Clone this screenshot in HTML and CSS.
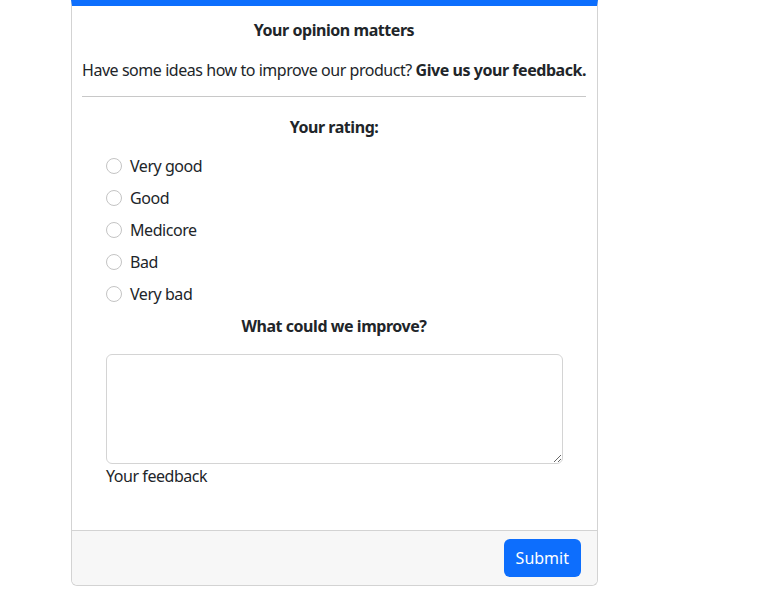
FILE: index.html
```html
<!DOCTYPE html>
<html lang="en">
<head>
<meta charset="utf-8">
<title>Feedback</title>
<link rel="stylesheet" href="styles.css">
</head>
<body>
<div class="card">
  <div class="card-body">
    <p class="title">Your opinion matters</p>
    <p class="lead-text">Have some ideas how to improve our product? <strong>Give us your feedback.</strong></p>
    <hr class="divider">
    <p class="title rating-title">Your rating:</p>
    <div class="options">
      <label class="option"><input type="radio" name="rating"><span>Very good</span></label>
      <label class="option"><input type="radio" name="rating"><span>Good</span></label>
      <label class="option"><input type="radio" name="rating"><span>Medicore</span></label>
      <label class="option"><input type="radio" name="rating"><span>Bad</span></label>
      <label class="option"><input type="radio" name="rating"><span>Very bad</span></label>
    </div>
    <p class="title improve-title">What could we improve?</p>
    <div class="field">
      <textarea class="textarea"></textarea>
      <label class="field-label">Your feedback</label>
    </div>
  </div>
  <div class="card-footer">
    <button class="btn-submit" type="button">Submit</button>
  </div>
</div>
</body>
</html>
```
FILE: styles.css
```css
* { box-sizing: border-box; }
html, body { margin: 0; padding: 0; background: #fff; }
body {
  font-family: "Noto Sans", "Liberation Sans", sans-serif;
  font-size: 16px;
  line-height: 24px;
  letter-spacing: -0.45px;
  color: #212529;
}
.card {
  margin-left: 71px;
  width: 527px;
  border: 1px solid #d3d3d3;
  border-top: 6px solid #0d6efd;
  border-radius: 0 0 6px 6px;
  background: #fff;
}
.card-body {
  padding: 12px 11px 42px 10px;
}
.title {
  margin: 0;
  text-align: center;
  font-weight: 700;
}
.lead-text {
  margin: 16px 0 0;
  text-align: center;
  white-space: nowrap;
}
.divider {
  margin: 14px 0 0;
  border: 0;
  border-top: 1px solid #c8c8c8;
  height: 0;
}
.rating-title { margin-top: 18px; }
.options {
  margin: 15px 24px 0;
  display: flex;
  flex-direction: column;
  gap: 8px;
}
.option {
  display: flex;
  align-items: center;
  height: 24px;
}
.option input {
  appearance: none;
  -webkit-appearance: none;
  width: 16px;
  height: 16px;
  margin: 0 8px 0 0;
  border: 1px solid #c4c4c4;
  border-radius: 50%;
  background: #fff;
}
.improve-title { margin-top: 8px; }
.field {
  margin: 16px 24px 0;
}
.textarea {
  display: block;
  width: 457px;
  height: 110px;
  border: 1px solid #d4d4d4;
  border-radius: 6px;
  font: inherit;
  padding: 6px 12px;
}
.field-label { display: block; }
.card-footer {
  border-top: 1px solid #d3d3d3;
  background: #f7f7f7;
  padding: 8px 16px 8px;
  display: flex;
  justify-content: flex-end;
  border-radius: 0 0 6px 6px;
}
.btn-submit {
  font: inherit;
  color: #fff;
  background: #0d6efd;
  border: 0;
  border-radius: 6px;
  height: 38px;
  padding: 0 12px;
}
```
